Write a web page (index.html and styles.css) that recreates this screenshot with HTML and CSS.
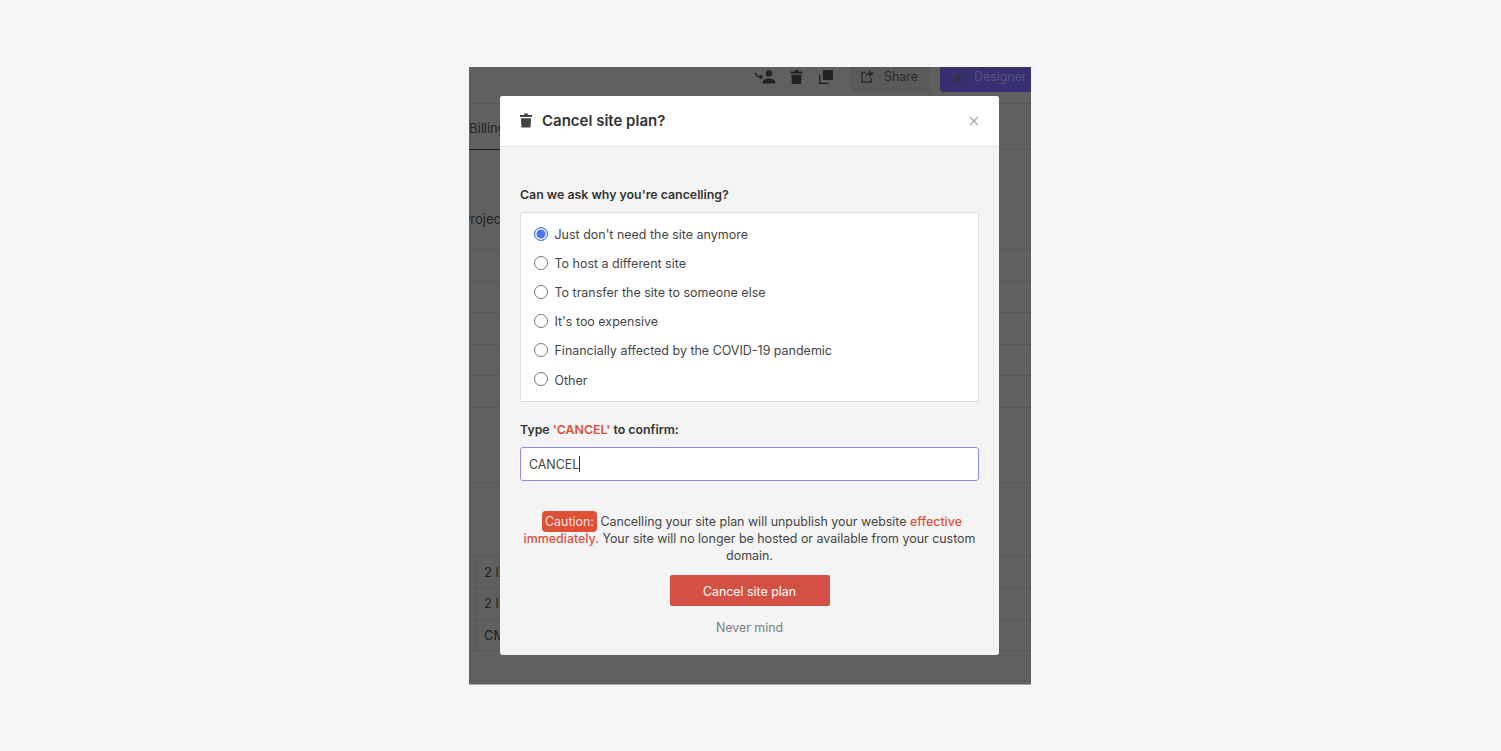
FILE: index.html
```html
<!DOCTYPE html>
<html lang="en">

<head>
    <meta charset="UTF-8">
    <meta name="viewport" content="width=device-width, initial-scale=1.0">
    <title>Cancel site plan</title>
    <link rel="stylesheet" href="styles.css">
</head>

<body>
    <div class="frame">
        <!-- page behind the modal -->
        <div class="topbar">
            <svg class="bar-icon user-icon" viewBox="0 0 22 14"><path d="M1 3l2.600 3.200c.5.600 1 .8 1.800.8H8M6 5l2.200 2L6 9" fill="none" stroke="#222" stroke-width="1.500"/><circle cx="15" cy="3.400" r="3.200" fill="#222"/><path d="M8.500 13.500c0-3.500 2.600-5 6.500-5s6.500 1.500 6.500 5z" fill="#222"/></svg>
            <svg class="bar-icon trash-icon" viewBox="0 0 13 15"><path d="M4.500 0h4v1.500h4.500v2.300H0V1.500h4.500z" fill="#222"/><path d="M1 5h11l-.6 10H1.600z" fill="#222"/></svg>
            <svg class="bar-icon clone-icon" viewBox="0 0 14 14"><path d="M4 0h10v10H4z" fill="#222"/><path d="M.7 4.500v8.800h8.800" fill="none" stroke="#222" stroke-width="1.300"/></svg>
            <div class="share-btn">
                <svg class="share-icon" viewBox="0 0 13 13"><path d="M5 2.500H1v9.500h9V8" fill="none" stroke="#2e2e2e" stroke-width="1.400"/><path d="M8 0l5 3.500L8 7V5C5.500 5 4.500 6 4 8c0-3.500 1.500-5.200 4-5.200z" fill="#2e2e2e"/></svg>
                Share
            </div>
            <div class="designer-btn">
                <svg class="brush-icon" viewBox="0 0 15 12"><path d="M15 0L8 7 6.200 5.500z" fill="#333"/><path d="M5.500 6C7.500 6 8 7.500 7.300 9 6 11.500 2.500 12 0 11c1.800-.5 2.500-1.500 3-3S4.500 6 5.500 6z" fill="#333"/></svg>
                Designer
            </div>
        </div>

        <div class="tabs">
            <span class="tab-active">Billing</span>
        </div>

        <div class="section-head">Projects</div>
        <div class="row"></div>
        <div class="row"></div>
        <div class="row"></div>
        <div class="row"></div>
        <div class="row"></div>
        <div class="row tall"></div>
        <div class="row taller"></div>
        <div class="row cell">2 lines</div>
        <div class="row cell">2 lines</div>
        <div class="row cell">CMS</div>
        <div class="row last"></div>

        <!-- modal -->
        <div class="modal">
            <div class="modal-header">
                <svg class="modal-icon" viewBox="0 0 13 15"><path d="M4.500 0h4v1.500h4.500v2.300H0V1.500h4.500z" fill="#444"/><path d="M1 5h11l-.6 10H1.600z" fill="#444"/></svg>
                <h2 class="modal-title">Cancel site plan?</h2>
                <svg class="modal-close" viewBox="0 0 10 10"><path d="M1 1l8 8M9 1l-8 8" stroke="#a6a6a6" stroke-width="1.300" fill="none"/></svg>
            </div>

            <div class="modal-body">
                <p class="label">Can we ask why you're cancelling?</p>
                <div class="reasons">
                    <label class="reason"><input type="radio" name="reason" checked>Just don't need the site anymore</label>
                    <label class="reason"><input type="radio" name="reason">To host a different site</label>
                    <label class="reason"><input type="radio" name="reason">To transfer the site to someone else</label>
                    <label class="reason"><input type="radio" name="reason">It's too expensive</label>
                    <label class="reason"><input type="radio" name="reason">Financially affected by the COVID-19 pandemic</label>
                    <label class="reason"><input type="radio" name="reason">Other</label>
                </div>

                <p class="label confirm-label">Type <span class="red">'CANCEL'</span> to confirm:</p>
                <div class="confirm-input">CANCEL<span class="caret"></span></div>

                <p class="caution"><span class="caution-tag">Caution:</span> Cancelling your site plan will unpublish your website <span class="red strong">effective immediately.</span> Your site will no longer be hosted or available from your custom domain.</p>

                <button type="button" class="cancel-btn">Cancel site plan</button>
                <div class="never-mind">Never mind</div>
            </div>
        </div>
    </div>
</body>

</html>
```

FILE: styles.css
```css
* {
    margin: 0;
    padding: 0;
    box-sizing: border-box;
}

body {
    font-family: Inter, "Liberation Sans", sans-serif;
    background-color: #f5f6f8;
    padding-top: 67px;
    height: 751px;
    overflow: hidden;
}

.frame {
    position: relative;
    width: 562px;
    height: 618px;
    margin-left: 469px;
    background-color: #606060;
    border-bottom: 1px solid #aaa;
    overflow: hidden;
    color: #222;
    font-size: 13px;
}

/* page behind the modal */
.topbar {
    display: flex;
    align-items: flex-start;
    height: 37px;
    border-bottom: 1px solid #585858;
}

.bar-icon {
    flex: none;
    height: 14px;
    margin-top: 3px;
}

.user-icon {
    width: 22px;
    margin-left: 285px;
}

.trash-icon {
    width: 13px;
    margin-left: 14px;
}

.clone-icon {
    width: 14px;
    margin-left: 16px;
}

.share-btn {
    display: flex;
    align-items: center;
    gap: 10px;
    flex: none;
    width: 80px;
    height: 25px;
    margin-left: 17px;
    padding: 0 0 6px 11px;
    background-color: #5a5a5a;
    border-radius: 0 0 3px 3px;
    color: #2a2a2a;
    font-size: 12.400px;
}

.share-icon {
    width: 13px;
    height: 13px;
}

.designer-btn {
    display: flex;
    align-items: center;
    gap: 8px;
    flex: none;
    width: 91px;
    height: 25px;
    margin-left: 10px;
    padding: 0 0 6px 11px;
    background-color: #372f6f;
    border-radius: 0 0 0 3px;
    color: #57527f;
    font-size: 12.400px;
}

.brush-icon {
    width: 15px;
    height: 12px;
}

.tabs {
    height: 46px;
    border-bottom: 1px solid #585858;
}

.tab-active {
    display: block;
    width: 31px;
    height: 46px;
    padding-top: 16px;
    border-bottom: 1px solid #1a1a1a;
    white-space: nowrap;
}

.section-head {
    height: 100px;
    padding-top: 61px;
    border-bottom: 1px solid #585858;
    text-indent: -7px;
}

.row {
    height: 31.500px;
    border-bottom: 1px solid #585858;
}

.row.tall {
    height: 75px;
}

.row.taller {
    height: 74px;
}

.row.last {
    height: 30px;
}

.cell {
    position: relative;
    padding: 7px 0 0 15px;
}

.cell::before {
    content: "";
    position: absolute;
    left: 7px;
    top: 0;
    bottom: 0;
    border-left: 1px solid #585858;
}

/* modal */
.modal {
    position: absolute;
    left: 31px;
    top: 29px;
    width: 499px;
    height: 559px;
    background-color: #f4f4f4;
    border-radius: 3px;
    overflow: hidden;
}

.modal-header {
    display: flex;
    align-items: center;
    height: 51px;
    padding: 0 20px 1px;
    background-color: #fff;
    border-bottom: 1px solid #e6e6e6;
}

.modal-icon {
    flex: none;
    width: 12px;
    height: 15px;
    margin-right: 10px;
}

.modal-title {
    flex: 1;
    font-size: 15px;
    font-weight: 600;
    color: #333;
}

.modal-close {
    width: 10px;
    height: 10px;
}

.modal-body {
    padding: 40px 20px 0;
}

.label {
    height: 17px;
    font-size: 12.350px;
    line-height: 16px;
    font-weight: 600;
    color: #333;
}

.reasons {
    height: 190px;
    margin-top: 8px;
    padding: 6px 14px 6px 13px;
    background-color: #fff;
    border: 1px solid #dedede;
    border-radius: 2px;
}

.reason {
    display: flex;
    align-items: center;
    height: 29.100px;
    padding-top: 2px;
    color: #444;
    font-size: 12.480px;
}

.reason input {
    appearance: none;
    flex: none;
    width: 14px;
    height: 14px;
    margin: -2px 6.500px 0 0;
    border: 1px solid #767676;
    border-radius: 50%;
    background-color: #fff;
}

.reason input:checked {
    border-color: #4a76ee;
    background-color: #4a76ee;
    box-shadow: inset 0 0 0 1.500px #fff;
}

.confirm-label {
    margin-top: 20px;
}

.red {
    color: #d94f3d;
}

.strong {
    font-weight: 500;
}

.confirm-input {
    display: flex;
    align-items: center;
    height: 34px;
    margin-top: 8px;
    padding: 0 8px;
    background-color: #fff;
    border: 1px solid #8a8cf0;
    border-radius: 3px;
    color: #444;
    font-size: 12.400px;
}

.caret {
    width: 1px;
    height: 16px;
    background-color: #333;
}

.caution {
    margin-top: 32px;
    font-size: 12.430px;
    line-height: 17px;
    text-align: center;
    color: #444;
}

.caution-tag {
    margin-left: 5px;
    padding: 3px 3px;
    background-color: #de5038;
    border-radius: 4px;
    color: #fbe4df;
}

.cancel-btn {
    display: block;
    width: 160px;
    height: 31px;
    margin: 11px auto 0;
    padding-top: 1px;
    background-color: #d55044;
    border: none;
    border-radius: 2px;
    color: #fff;
    font-family: inherit;
    font-size: 12.400px;
}

.never-mind {
    margin-top: 14px;
    text-align: center;
    font-size: 12.400px;
    color: #7d7d7d;
}
```
